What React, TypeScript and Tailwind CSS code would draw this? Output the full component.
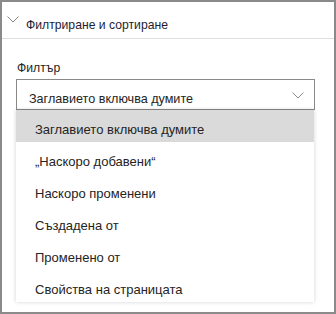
import React from 'react';

const options = [
  'Заглавието включва думите',
  '„Наскоро добавени“',
  'Наскоро променени',
  'Създадена от',
  'Променено от',
  'Свойства на страницата',
];

function Chevron({ className }: { className?: string }) {
  return (
    <svg className={className} viewBox="0 0 12 7" fill="none" stroke="currentColor" strokeWidth={1}>
      <path d="M0.5 0.5L6 6L11.5 0.5" />
    </svg>
  );
}

export default function App() {
  return (
    <div
      className="w-[336px] h-[314px] border-2 border-[#8a8a8a] bg-white text-[#252423] overflow-hidden"
      style={{ fontFamily: '"Liberation Sans", Arial, sans-serif' }}
    >
      <div className="h-[37px] flex items-start border-b border-[#e1dfdd]">
        <Chevron className="w-[12px] h-[7px] ml-[5px] mt-[14px] text-[#8a8886]" />
        <span className="ml-[7px] mt-[15px] text-[12.2px] leading-[16px] text-[#1e1d33]">Филтриране и сортиране</span>
      </div>

      <div className="pl-[14px] pr-[19px] pt-[21px]">
        <div className="text-[12.2px] leading-[16px] ml-[1px]">Филтър</div>
        <div className="mt-[3px] h-[31px] border border-[#8a8886] flex items-center justify-between pl-[12px] pr-[10px]">
          <span className="text-[12.6px] mt-[9px]">Заглавието включва думите</span>
          <Chevron className="w-[12px] h-[7px] mt-[1px] text-[#8a8886]" />
        </div>
        <ul className="bg-white shadow-[0_0_4px_rgba(0,0,0,0.18)] mr-[1px]">
          {options.map((o, i) => (
            <li
              key={o}
              className={`h-[32px] flex items-center pl-[19px] text-[13px] pt-[7px] ${i === 0 ? 'bg-[#dadada]' : ''}`}
            >
              {o}
            </li>
          ))}
        </ul>
      </div>
    </div>
  );
}
